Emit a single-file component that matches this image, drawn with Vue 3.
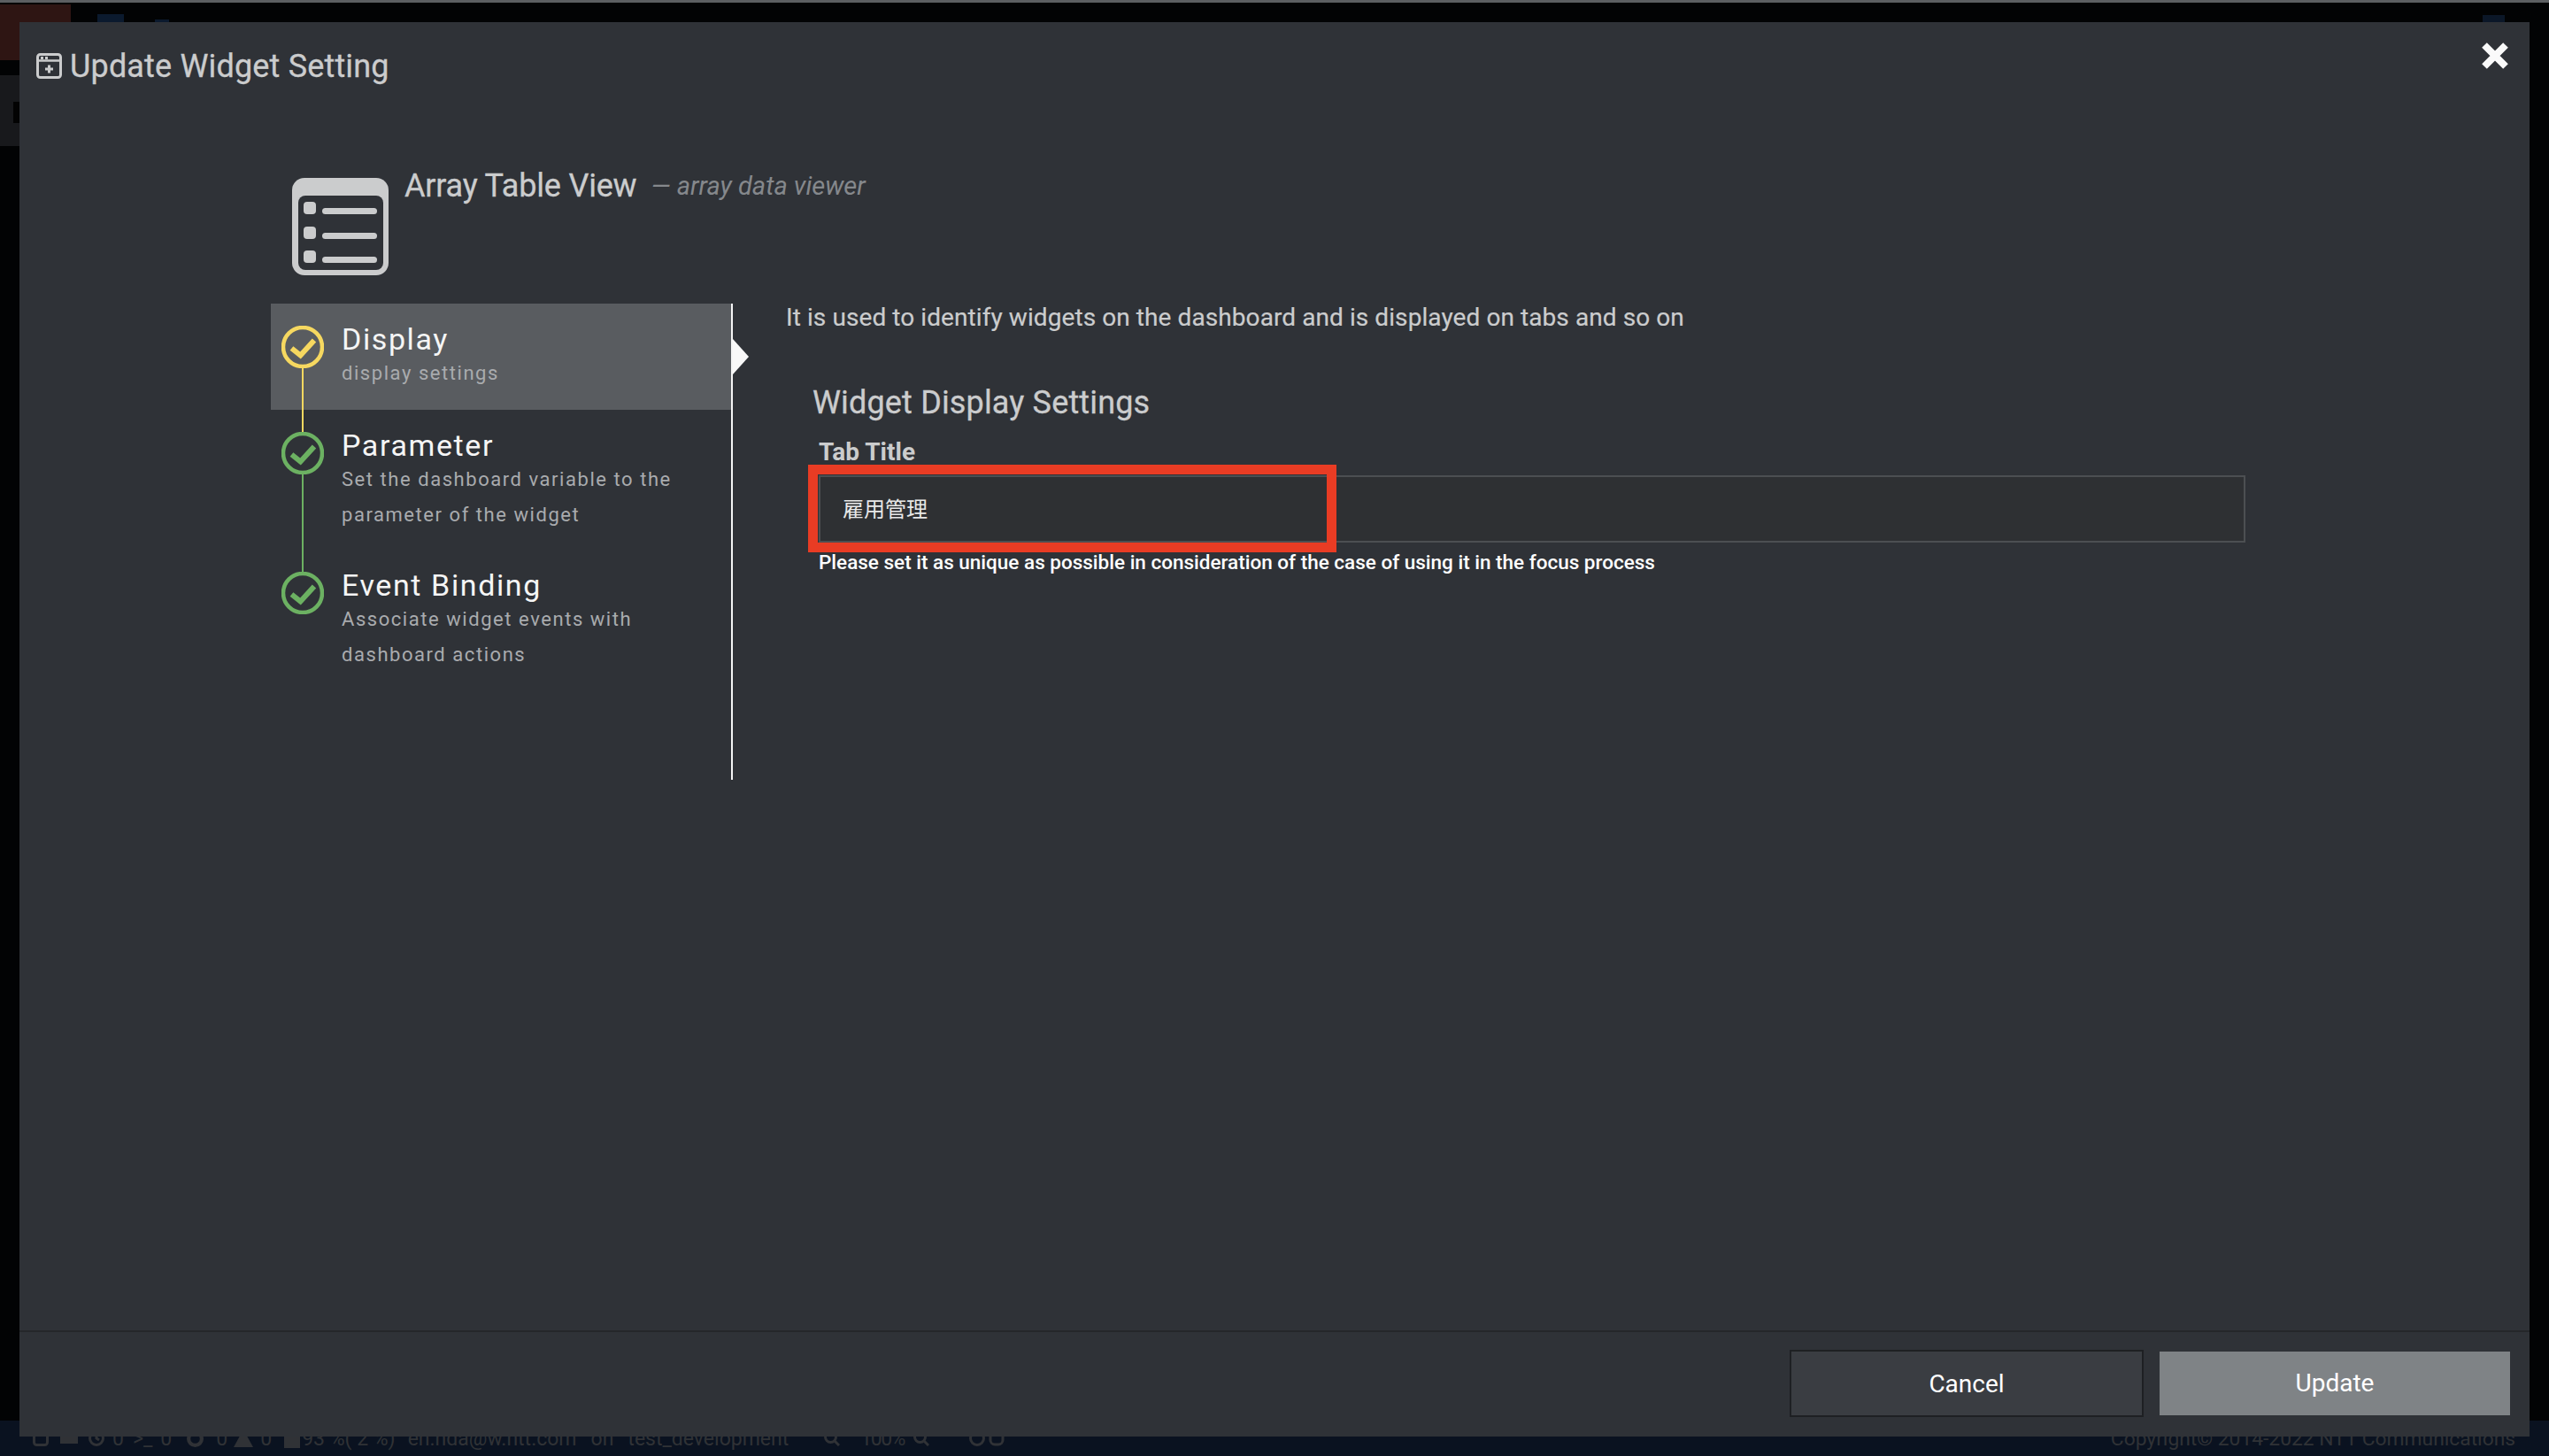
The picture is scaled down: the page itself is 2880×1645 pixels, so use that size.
<template>
  <div class="page">
    <div class="backdrop">
      <div class="top-line"></div>
      <div class="app-header">
        <div class="logo-patch"></div>
        <div class="dim-pill"></div>
        <div class="dim-chip"></div>
        <div class="header-spacer"></div>
        <div class="dim-user"></div>
      </div>
      <div class="side-item"><span class="side-glyph"></span></div>
      <div class="app-main"></div>
      <div class="status-bar">
        <div class="status-left">
          <svg class="st-icon st-square" viewBox="0 0 18 18"><rect x="1.5" y="1.5" width="15" height="15" rx="3" /></svg>
          <span class="st-keys"></span>
          <svg class="st-icon st-clock" viewBox="0 0 18 18"><circle cx="9" cy="9" r="7.5" /><path d="M9 4v5l3 2" /></svg>
          <span class="st-num">0</span>
          <span class="st-prompt">&gt;_</span>
          <span class="st-num">0</span>
          <svg class="st-icon st-round" viewBox="0 0 18 18"><circle cx="9" cy="9" r="7" stroke-width="4" /></svg>
          <span class="st-gap">0</span>
          <span class="st-warn"></span>
          <span class="st-num2">0</span>
          <span class="st-keys st-bug"></span>
          <span class="st-load">93 %( 2 %)</span>
          <span class="st-user">en.nda@w.ntt.com</span>
          <span class="st-on">on</span>
          <span class="st-on">test_development</span>
          <svg class="st-icon st-mag" viewBox="0 0 18 18"><circle cx="7.5" cy="7.5" r="6" /><path d="M12 12l5 5" /></svg>
          <span class="st-zoom">100%</span>
          <svg class="st-icon st-mag2" viewBox="0 0 18 18"><circle cx="7.5" cy="7.5" r="6" /><path d="M12 12l5 5" /></svg>
          <svg class="st-icon st-end" viewBox="0 0 18 18"><circle cx="9" cy="9" r="7.5" /></svg>
          <svg class="st-icon st-end2" viewBox="0 0 18 18"><rect x="2" y="2" width="14" height="14" rx="5" /></svg>
        </div>
        <div class="status-right">Copyright© 2014-2022 NTT Communications</div>
      </div>
    </div>

    <div class="modal">
      <div class="modal-head">
        <div class="modal-title">
          <svg class="title-icon" viewBox="0 0 29 29">
            <rect x="1.5" y="1.5" width="26" height="26" rx="3" fill="none" stroke="currentColor" stroke-width="3" />
            <path d="M2 8.5h25" stroke="currentColor" stroke-width="2.5" />
            <rect x="5" y="4" width="3" height="3" fill="currentColor" />
            <rect x="10" y="4" width="3" height="3" fill="currentColor" />
            <path d="M14.5 13.5v9M10 18h9" stroke="currentColor" stroke-width="3" fill="none" />
          </svg>
          <span>Update Widget Setting</span>
        </div>
        <svg class="close-icon" viewBox="0 0 32 32">
          <path d="M4 4l24 24M28 4L4 28" stroke="#fafafa" stroke-width="8" fill="none" />
        </svg>
      </div>

      <div class="modal-body">
        <div class="widget-head">
          <svg class="widget-icon" viewBox="0 0 109 110">
            <rect width="109" height="110" rx="14" fill="#cbcccd" />
            <rect x="7" y="20" width="96" height="84" rx="8" fill="#2f3237" />
            <g fill="#cbcccd">
              <rect x="13" y="27" width="14" height="14" rx="4" />
              <rect x="13" y="55" width="14" height="14" rx="4" />
              <rect x="13" y="82" width="14" height="14" rx="4" />
              <rect x="34" y="34" width="62" height="7" rx="3.5" />
              <rect x="34" y="62" width="62" height="7" rx="3.5" />
              <rect x="34" y="89" width="62" height="7" rx="3.5" />
            </g>
          </svg>
          <div class="widget-name">Array Table View</div>
          <div class="widget-desc">— array data viewer</div>
        </div>

        <div class="wizard">
          <ul class="steps">
            <li v-for="step in steps" :key="step.title" class="step" :class="[step.tone, { active: step.active }]">
              <div class="step-marker">
                <svg class="step-circle" viewBox="0 0 48 48">
                  <circle cx="24" cy="24" r="22" fill="none" stroke="currentColor" stroke-width="4.5" />
                  <path d="M11.5 25.5l10 8L37 16.5" fill="none" stroke="currentColor" stroke-width="6" />
                </svg>
                <div v-if="step.line" class="step-line"></div>
              </div>
              <div class="step-text">
                <div class="step-title">{{ step.title }}</div>
                <div class="step-sub">{{ step.sub }}</div>
              </div>
              <span v-if="step.active" class="step-arrow"></span>
            </li>
          </ul>

          <div class="pane">
            <p class="pane-desc">It is used to identify widgets on the dashboard and is displayed on tabs and so on</p>
            <h3 class="pane-title">Widget Display Settings</h3>
            <div class="field">
              <label class="field-label">Tab Title</label>
              <div class="input-wrap">
                <input class="field-input" type="text" value="雇用管理" />
                <div class="highlight"></div>
              </div>
              <div class="field-help">Please set it as unique as possible in consideration of the case of using it in the focus process</div>
            </div>
          </div>
        </div>
      </div>

      <div class="modal-foot">
        <button class="btn btn-cancel">Cancel</button>
        <button class="btn btn-update">Update</button>
      </div>
    </div>
  </div>
</template>

<script setup>
const steps = [
  { title: 'Display', sub: 'display settings', tone: 'yellow', active: true, line: true },
  { title: 'Parameter', sub: 'Set the dashboard variable to the parameter of the widget', tone: 'green', line: true },
  { title: 'Event Binding', sub: 'Associate widget events with dashboard actions', tone: 'green' }
];
</script>

<style>
html, body {
  margin: 0;
  background: #020304;
}
</style>

<style scoped>
.page {
  position: relative;
  width: 2880px;
  height: 1645px;
  overflow: hidden;
  font-family: Roboto, "Noto Sans CJK JP", sans-serif;
}
.backdrop {
  display: flex;
  flex-direction: column;
  height: 100%;
  background: #020304;
}
.top-line {
  height: 3px;
  background: #5c5f62;
}
.app-header {
  display: flex;
  align-items: flex-end;
  height: 82px;
}
.logo-patch {
  width: 80px;
  height: 63px;
  margin-bottom: 17px;
  background: #2e1513;
}
.dim-pill {
  width: 30px;
  height: 9px;
  margin: 0 0 60px 30px;
  background: #0b1a2e;
}
.dim-chip {
  width: 16px;
  height: 3px;
  margin: 0 0 60px 35px;
  background: #0b1a2e;
}
.header-spacer {
  flex: 1;
}
.dim-user {
  width: 25px;
  height: 8px;
  margin: 0 50px 60px 0;
  background: #0b1728;
}
.side-item {
  width: 22px;
  height: 80px;
  background: #18191c;
  position: relative;
}
.side-glyph {
  position: absolute;
  right: 0;
  top: 30px;
  width: 7px;
  height: 24px;
  background: #030303;
}
.app-main {
  flex: 1;
}
.status-bar {
  display: flex;
  justify-content: space-between;
  align-items: center;
  height: 40px;
  background: #0a1220;
  color: #303236;
  font-size: 23px;
}
.status-left {
  display: flex;
  align-items: center;
  padding-left: 37px;
  white-space: nowrap;
}
.status-right {
  padding-right: 38px;
  font-size: 22.8px;
}
.st-icon {
  fill: none;
  stroke: #303236;
  stroke-width: 3;
  flex-shrink: 0;
}
.st-square {
  width: 18px;
  height: 18px;
}
.st-clock {
  width: 18px;
  height: 18px;
  margin-left: 12px;
}
.st-round {
  width: 19px;
  height: 19px;
  margin-left: 17px;
}
.st-mag {
  width: 18px;
  height: 18px;
  margin-left: 40px;
}
.st-mag2 {
  width: 18px;
  height: 18px;
  margin-left: 10px;
}
.st-end {
  width: 18px;
  height: 18px;
  margin-left: 45px;
}
.st-end2 {
  width: 18px;
  height: 18px;
  margin-left: 4px;
}
.st-keys {
  width: 20px;
  height: 12px;
  margin-left: 13px;
  background: #303236;
}
.st-bug {
  width: 18px;
  height: 22px;
  margin-left: 14px;
}
.st-num {
  margin-left: 9px;
}
.st-gap {
  margin-left: 14px;
}
.st-num2 {
  margin-left: 8px;
}
.st-prompt {
  margin-left: 10px;
}
.st-warn {
  width: 0;
  height: 0;
  margin-left: 7px;
  border-left: 11px solid transparent;
  border-right: 11px solid transparent;
  border-bottom: 20px solid #303236;
}
.st-load {
  margin-left: 2px;
}
.st-user {
  margin-left: 14px;
}
.st-on {
  margin-left: 16px;
}
.st-zoom {
  margin-left: 23px;
  letter-spacing: -1.5px;
}

.modal {
  position: absolute;
  left: 22px;
  top: 25px;
  width: 2836px;
  height: 1598px;
  display: flex;
  flex-direction: column;
  background: #2f3237;
  color: #cbcccd;
}
.modal-head {
  display: flex;
  justify-content: space-between;
  align-items: flex-start;
  height: 100px;
  padding: 22px 23px 0 19px;
  box-sizing: border-box;
}
.modal-title {
  display: flex;
  align-items: center;
  gap: 9px;
  height: 55px;
  font-size: 36px;
  letter-spacing: 0.17px;
  -webkit-text-stroke: 0.3px;
}
.title-icon {
  width: 29px;
  height: 29px;
}
.close-icon {
  width: 32px;
  height: 32px;
}
.modal-body {
  flex: 1;
  padding-left: 284px;
}
.widget-head {
  display: flex;
  align-items: flex-start;
  padding: 76px 0 32px 24px;
}
.widget-icon {
  width: 109px;
  height: 110px;
  flex-shrink: 0;
}
.widget-name {
  margin-left: 18px;
  margin-top: -16px;
  font-size: 36px;
  line-height: 50px;
  letter-spacing: -0.2px;
  -webkit-text-stroke: 0.3px;
}
.widget-desc {
  margin-left: 16px;
  margin-top: -16px;
  font-size: 29px;
  line-height: 50px;
  font-style: italic;
  color: #85888c;
}
.wizard {
  display: flex;
  align-items: flex-start;
}
.steps {
  list-style: none;
  margin: 0;
  padding: 0;
  width: 520px;
  height: 538px;
  border-right: 2px solid #f5f5f5;
  flex-shrink: 0;
}
.step {
  position: relative;
  display: flex;
  gap: 20px;
  padding-left: 12px;
  height: 158px;
}
.step.active {
  height: 120px;
  background: #595c60;
}
.step.yellow {
  color: #f6d860;
}
.step.green {
  color: #6cb162;
}
.step-marker {
  display: flex;
  flex-direction: column;
  align-items: center;
  width: 48px;
  padding-top: 25px;
  flex-shrink: 0;
}
.step-circle {
  width: 48px;
  height: 48px;
  flex-shrink: 0;
}
.step-line {
  flex: 1;
  width: 2px;
  margin-bottom: -25px;
  background: currentColor;
}
.step-text {
  padding-top: 21px;
}
.step-title {
  font-size: 34px;
  line-height: 38px;
  letter-spacing: 1.6px;
  color: #f5f5f5;
}
.step-sub {
  font-size: 22px;
  line-height: 40px;
  letter-spacing: 1.55px;
  color: #a9abae;
}
.step-arrow {
  position: absolute;
  right: -20px;
  top: 40px;
  border-left: 18px solid #f8f8f8;
  border-top: 20px solid transparent;
  border-bottom: 20px solid transparent;
}
.pane {
  flex: 1;
  padding-left: 60px;
}
.pane-desc {
  margin: 0;
  font-size: 28px;
  line-height: 32px;
  letter-spacing: 0.08px;
  -webkit-text-stroke: 0.2px;
}
.pane-title {
  margin: 58px 0 0 30px;
  font-size: 36px;
  line-height: 44px;
  font-weight: 400;
  letter-spacing: 0.16px;
  -webkit-text-stroke: 0.3px;
}
.field {
  margin: 17px 0 0 37px;
  width: 1612px;
}
.field-label {
  display: block;
  font-size: 28px;
  line-height: 34px;
  font-weight: 700;
}
.input-wrap {
  position: relative;
  margin-top: 9px;
}
.field-input {
  display: block;
  width: 100%;
  height: 76px;
  box-sizing: border-box;
  padding: 0 25px 3px;
  border: 2px solid #4c4f52;
  background: #2e3033;
  color: #e8e8e8;
  font-family: inherit;
  font-size: 24px;
}
.highlight {
  position: absolute;
  left: -12px;
  top: -12px;
  width: 575px;
  height: 77px;
  border: 11px solid #e93c24;
  pointer-events: none;
}
.field-help {
  margin-top: 7px;
  font-size: 22.5px;
  line-height: 30px;
  font-weight: 500;
  color: #fff;
}
.modal-foot {
  display: flex;
  justify-content: flex-end;
  align-items: center;
  gap: 18px;
  height: 120px;
  padding: 0 22px 3px 0;
  box-sizing: border-box;
  border-top: 2px solid #25272a;
}
.btn {
  font-family: inherit;
  font-size: 28px;
  color: #fff;
  cursor: pointer;
}
.btn-cancel {
  width: 400px;
  height: 76px;
  padding-top: 3px;
  background: #3a3d42;
  border: 2px solid #1e2023;
}
.btn-update {
  width: 396px;
  height: 72px;
  background: #7f8386;
  border: none;
}
</style>
